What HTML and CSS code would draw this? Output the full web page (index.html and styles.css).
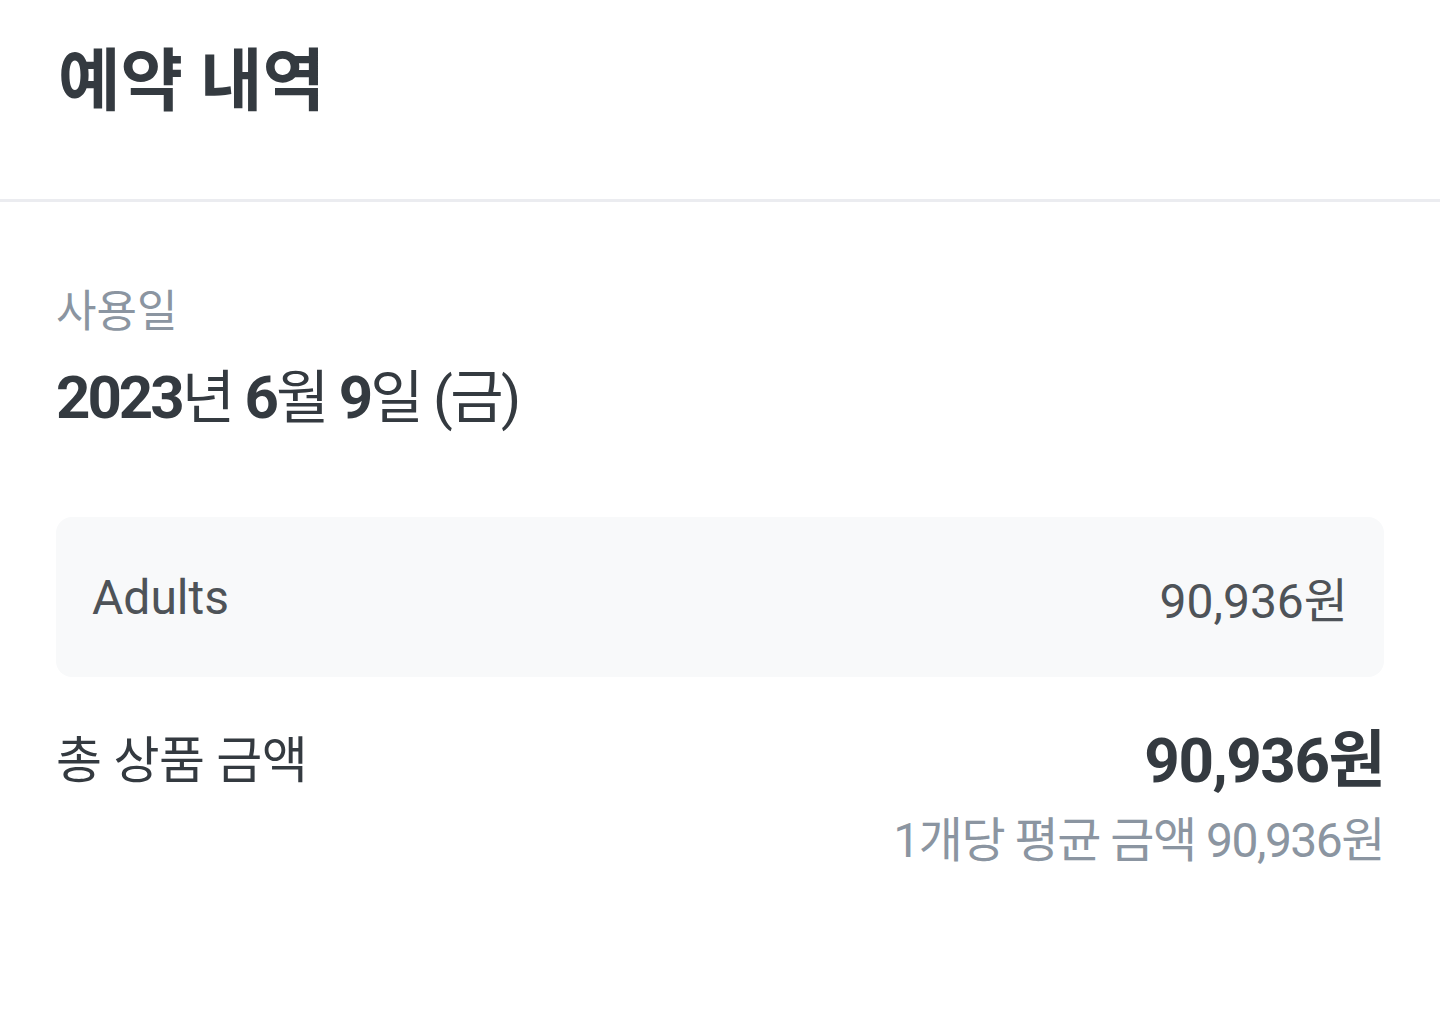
FILE: index.html
```html
<!DOCTYPE html>
<html lang="ko">
  <head>
    <title>예약 내역</title>
    <meta charset="utf-8">
    <link rel="stylesheet" href="styles.css">
  </head>
  <body>
    <div class="header">
      <h1 class="title">예약 내역</h1>
    </div>

    <div class="content">
      <div class="label">사용일</div>
      <div class="date">2023<span class="unit">년</span> 6<span class="unit">월</span> 9<span class="unit">일 (금)</span></div>

      <div class="option-box">
        <span class="option-name">Adults</span>
        <span class="option-price">90,936원</span>
      </div>

      <div class="total-row">
        <span class="total-label">총 상품 금액</span>
        <div class="total-right">
          <div class="total-price">90,936원</div>
          <div class="total-sub">1개당 평균 금액 90,936원</div>
        </div>
      </div>
    </div>
  </body>
</html>
```

FILE: styles.css
```css
body{
  margin: 0;
  background-color: #fff;
  font-family: "Roboto", "Noto Sans CJK KR", sans-serif;
  color: #343a40;
}
.header{
  box-sizing: border-box;
  height: 202px;
  padding: 38px 58px 0;
  border-bottom: 3px solid #ebecf0;
}
.title{
  margin: 0;
  font-size: 68px;
  line-height: 88px;
  font-weight: bold;
}
.content{
  padding: 80px 56px 0;
}
.label{
  font-size: 44px;
  line-height: 60px;
  color: #8b95a1;
}
.date{
  margin-top: 16px;
  font-size: 60px;
  line-height: 80px;
  font-weight: bold;
  letter-spacing: -3px;
}
.date .unit{
  font-size: 58px;
  font-weight: normal;
  letter-spacing: -2.5px;
}
.option-box{
  display: flex;
  justify-content: space-between;
  align-items: center;
  height: 160px;
  margin-top: 79px;
  padding: 0 36px;
  background-color: #f8f9fa;
  border-radius: 16px;
  font-size: 48px;
  color: #4e5358;
}
.total-row{
  display: flex;
  justify-content: space-between;
  align-items: flex-start;
  margin-top: 44px;
}
.total-label{
  font-size: 50px;
  line-height: 80px;
  letter-spacing: -0.5px;
}
.total-right{
  text-align: right;
}
.total-price{
  font-size: 62px;
  line-height: 80px;
  font-weight: bold;
  letter-spacing: -1.5px;
}
.total-sub{
  margin-top: 8px;
  font-size: 48px;
  line-height: 64px;
  color: #8b95a1;
  letter-spacing: -1.5px;
}
```
